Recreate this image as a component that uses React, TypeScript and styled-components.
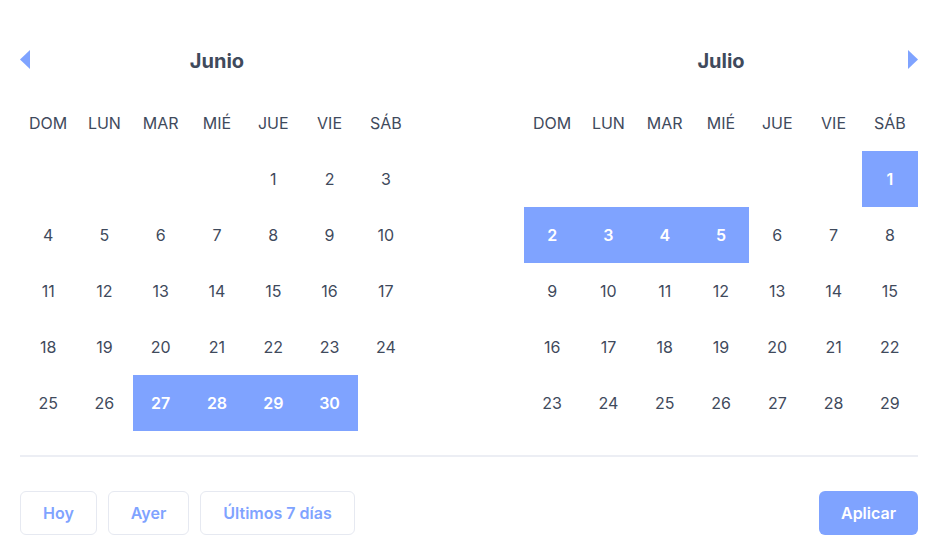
import React from "react";
import styled, { createGlobalStyle } from "styled-components";

const GlobalStyle = createGlobalStyle`
    body {
        margin: 0;
        background: #ffffff;
        font-family: Inter, "Noto Sans", "Liberation Sans", sans-serif;
    }
`;

const Page = styled.div`
    width: 942px;
    height: 558px;
    box-sizing: border-box;
    padding: 27px 24px 0 20px;
    display: flex;
    flex-direction: column;
`;

const Months = styled.div`
    display: flex;
    justify-content: space-between;
`;

const Calendar = styled.div`
    width: 394px;
`;

const Header = styled.div`
    position: relative;
    height: 68px;
    display: flex;
    align-items: center;
    justify-content: center;
`;

const Title = styled.h2`
    margin: 0;
    font-size: 20px;
    font-weight: 700;
    color: #3f4a5c;
`;

const Arrow = styled.button<{ $side: "left" | "right" }>`
    position: absolute;
    top: 23px;
    ${({ $side }) => ($side === "left" ? "left: 0;" : "right: 0;")}
    width: 10px;
    height: 19px;
    padding: 0;
    border: none;
    background: #7fa3ff;
    cursor: pointer;
    clip-path: ${({ $side }) =>
        $side === "left" ? "polygon(100% 0, 0 50%, 100% 100%)" : "polygon(0 0, 100% 50%, 0 100%)"};
`;

const Grid = styled.div`
    display: grid;
    grid-template-columns: repeat(7, 1fr);
    grid-auto-rows: 56px;
`;

const WeekDay = styled.div`
    display: flex;
    align-items: center;
    justify-content: center;
    font-size: 16px;
    color: #3f4a5c;
`;

const Day = styled.div<{ $selected?: boolean }>`
    display: flex;
    align-items: center;
    justify-content: center;
    font-size: 16px;
    font-weight: ${({ $selected }) => ($selected ? 600 : 400)};
    color: ${({ $selected }) => ($selected ? "#ffffff" : "#3f4a5c")};
    background: ${({ $selected }) => ($selected ? "#7fa3ff" : "transparent")};
`;

const Divider = styled.hr`
    margin: 24px 0 0;
    border: none;
    height: 2px;
    background: #eceef4;
`;

const Footer = styled.div`
    margin-top: 34px;
    display: flex;
    align-items: center;
    gap: 11px;
`;

const Preset = styled.button`
    height: 44px;
    padding: 0 22px;
    border: 1px solid #e6e9f1;
    border-radius: 6px;
    background: #ffffff;
    color: #7fa3ff;
    font-family: inherit;
    font-size: 16px;
    font-weight: 600;
    cursor: pointer;
`;

const Apply = styled.button`
    margin-left: auto;
    height: 44px;
    width: 99px;
    border: none;
    border-radius: 6px;
    background: #7fa3ff;
    color: #ffffff;
    font-family: inherit;
    font-size: 16px;
    font-weight: 600;
    cursor: pointer;
`;

const weekDays = ["DOM", "LUN", "MAR", "MIÉ", "JUE", "VIE", "SÁB"];

interface MonthProps {
    title: string;
    offset: number;
    days: number;
    selected: number[];
    arrow: "left" | "right";
}

const Month: React.FC<MonthProps> = ({ title, offset, days, selected, arrow }) => (
    <Calendar>
        <Header>
            <Arrow $side={arrow} aria-label={arrow === "left" ? "Anterior" : "Siguiente"} />
            <Title>{title}</Title>
        </Header>
        <Grid>
            {weekDays.map((d) => (
                <WeekDay key={d}>{d}</WeekDay>
            ))}
            {Array.from({ length: offset }).map((_, i) => (
                <Day key={"e" + i} />
            ))}
            {Array.from({ length: days }).map((_, i) => (
                <Day key={i} $selected={selected.includes(i + 1)}>
                    {i + 1}
                </Day>
            ))}
        </Grid>
    </Calendar>
);

export default function App() {
    return (
        <>
            <GlobalStyle />
            <Page>
                <Months>
                    <Month title="Junio" offset={4} days={30} selected={[27, 28, 29, 30]} arrow="left" />
                    <Month title="Julio" offset={6} days={29} selected={[1, 2, 3, 4, 5]} arrow="right" />
                </Months>
                <Divider />
                <Footer>
                    <Preset>Hoy</Preset>
                    <Preset>Ayer</Preset>
                    <Preset>Últimos 7 días</Preset>
                    <Apply>Aplicar</Apply>
                </Footer>
            </Page>
        </>
    );
}
